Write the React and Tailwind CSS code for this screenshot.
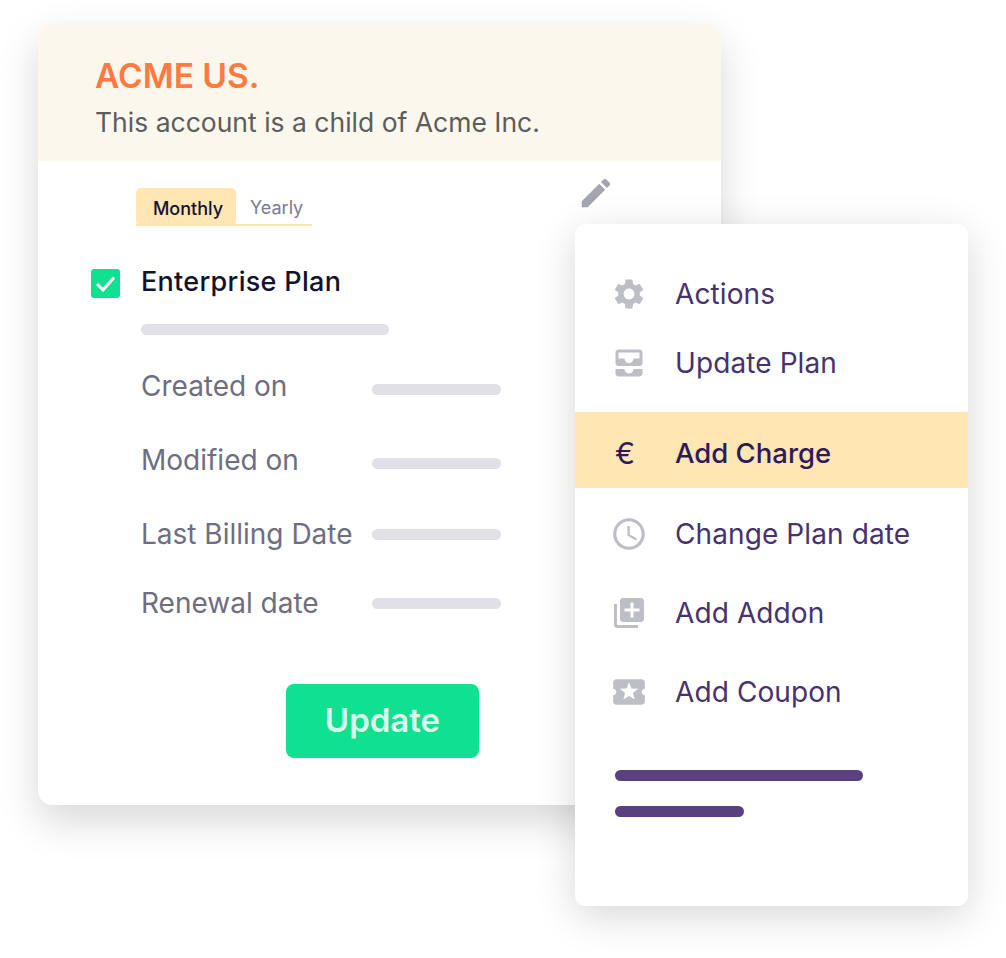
import React from "react";
import { MdEdit, MdSettings, MdAllInbox, MdAccessTime, MdLibraryAdd, MdLocalActivity } from "react-icons/md";

const fields = [
  { label: "Created on", cls: "mt-[33px]", bar: "mt-[6px]" },
  { label: "Modified on", cls: "mt-[38px]", bar: "mt-[6px]" },
  { label: "Last Billing Date", cls: "mt-[38px]", bar: "mt-[1px]" },
  { label: "Renewal date", cls: "mt-[33px]", bar: "mt-[1px]" },
];

const MenuItem = ({ icon: Icon, label, cls, size = 36, iconCls = "ml-0" }) => (
  <div className={`flex items-center h-[40px] pl-[36px] ${cls}`}>
    <div className="w-[64px] flex items-center">
      <Icon size={size} className={`text-[#bdbec6] ${iconCls}`} />
    </div>
    <span className="text-[28px] text-[#46326e] tracking-[0.1px]">{label}</span>
  </div>
);

const App = () => {
  return (
    <div className="relative w-[1006px] h-[958px] bg-white overflow-hidden font-['Inter',sans-serif]">
      <div className="pt-[24px] pl-[38px]">
        {/* Main card */}
        <div className="w-[683px] h-[781px] bg-white rounded-[14px] overflow-hidden shadow-[0_16px_40px_rgba(0,0,0,0.16)]">
          <div className="h-[137px] bg-[#fbf7ec] pl-[57px] pt-[32px]">
            <h1 className="text-[33.5px] leading-[40px] font-semibold text-[#ff7a41]">ACME US.</h1>
            <p className="mt-[10px] text-[26.5px] leading-[32px] text-[#5c5c5c]">This account is a child of Acme Inc.</p>
          </div>

          <div className="flex items-start justify-between pl-[98px] pr-[106px] pt-[27px]">
            <div className="flex items-end w-[176px] h-[38px] border-b-2 border-[#ffe6b3]">
              <div className="h-[38px] w-[100px] -mb-[2px] pl-[4px] pt-[2px] rounded-[5px] bg-[#ffe6b3] flex items-center justify-center text-[18px] font-medium text-[#12122e]">
                Monthly
              </div>
              <div className="h-[36px] pl-[14px] pt-[2px] flex items-center text-[18px] text-[#7c7c90]">Yearly</div>
            </div>
            <MdEdit size={38} className="text-[#a5a5b1] -mt-[14px]" />
          </div>

          <div className="flex items-center mt-[38px] pl-[53px]">
            <div className="w-[29px] h-[29px] mt-[2px] rounded-[3px] bg-[#10e190] flex items-center justify-center">
              <svg width="21" height="17" viewBox="0 0 21 17" fill="none">
                <path d="M2 9l6 6L19 2.5" stroke="#fff" strokeWidth="3" />
              </svg>
            </div>
            <span className="ml-[21px] text-[27px] leading-[36px] font-medium tracking-[0.3px] text-[#12122e]">Enterprise Plan</span>
          </div>

          <div className="ml-[103px] mt-[24px] w-[248px] h-[11px] rounded-full bg-[#e0e0e6]" />

          <div className="ml-[103px]">
            {fields.map((f) => (
              <div key={f.label} className={`flex items-center h-[36px] ${f.cls}`}>
                <span className="w-[231px] text-[28px] text-[#6e6e80] whitespace-nowrap">{f.label}</span>
                <div className={`w-[129px] h-[11px] rounded-full bg-[#e0e0e6] ${f.bar}`} />
              </div>
            ))}
          </div>

          <div className="ml-[248px] mt-[63px] w-[193px] h-[74px] rounded-[8px] bg-[#10e190] flex items-center justify-center text-[33px] font-semibold text-[#dcf9ec]">
            Update
          </div>
        </div>
      </div>

      {/* Actions menu */}
      <div className="absolute left-[575px] top-[224px] w-[393px] h-[682px] bg-white rounded-[10px] shadow-[0_10px_40px_rgba(0,0,0,0.16)]">
        <MenuItem icon={MdSettings} label="Actions" cls="mt-[50px]" />
        <MenuItem icon={MdAllInbox} label="Update Plan" cls="mt-[29px]" />
        <div className="flex items-center h-[76px] mt-[29px] pl-[40px] pt-[7px] bg-[#ffe6b3]">
          <span className="w-[60px] text-[30px] text-[#2c1a5a]">€</span>
          <span className="text-[27.5px] font-medium text-[#2c1a5a]">Add Charge</span>
        </div>
        <MenuItem icon={MdAccessTime} label="Change Plan date" cls="mt-[26px]" size={38} iconCls="-ml-[1px]" />
        <MenuItem icon={MdLibraryAdd} label="Add Addon" cls="mt-[39px]" />
        <MenuItem icon={MdLocalActivity} label="Add Coupon" cls="mt-[39px]" size={38} iconCls="-ml-[1px]" />
        <div className="ml-[40px] mt-[58px] w-[248px] h-[11px] rounded-full bg-[#5b4080]" />
        <div className="ml-[40px] mt-[25px] w-[129px] h-[11px] rounded-full bg-[#5b4080]" />
      </div>
    </div>
  );
};

export default App;
